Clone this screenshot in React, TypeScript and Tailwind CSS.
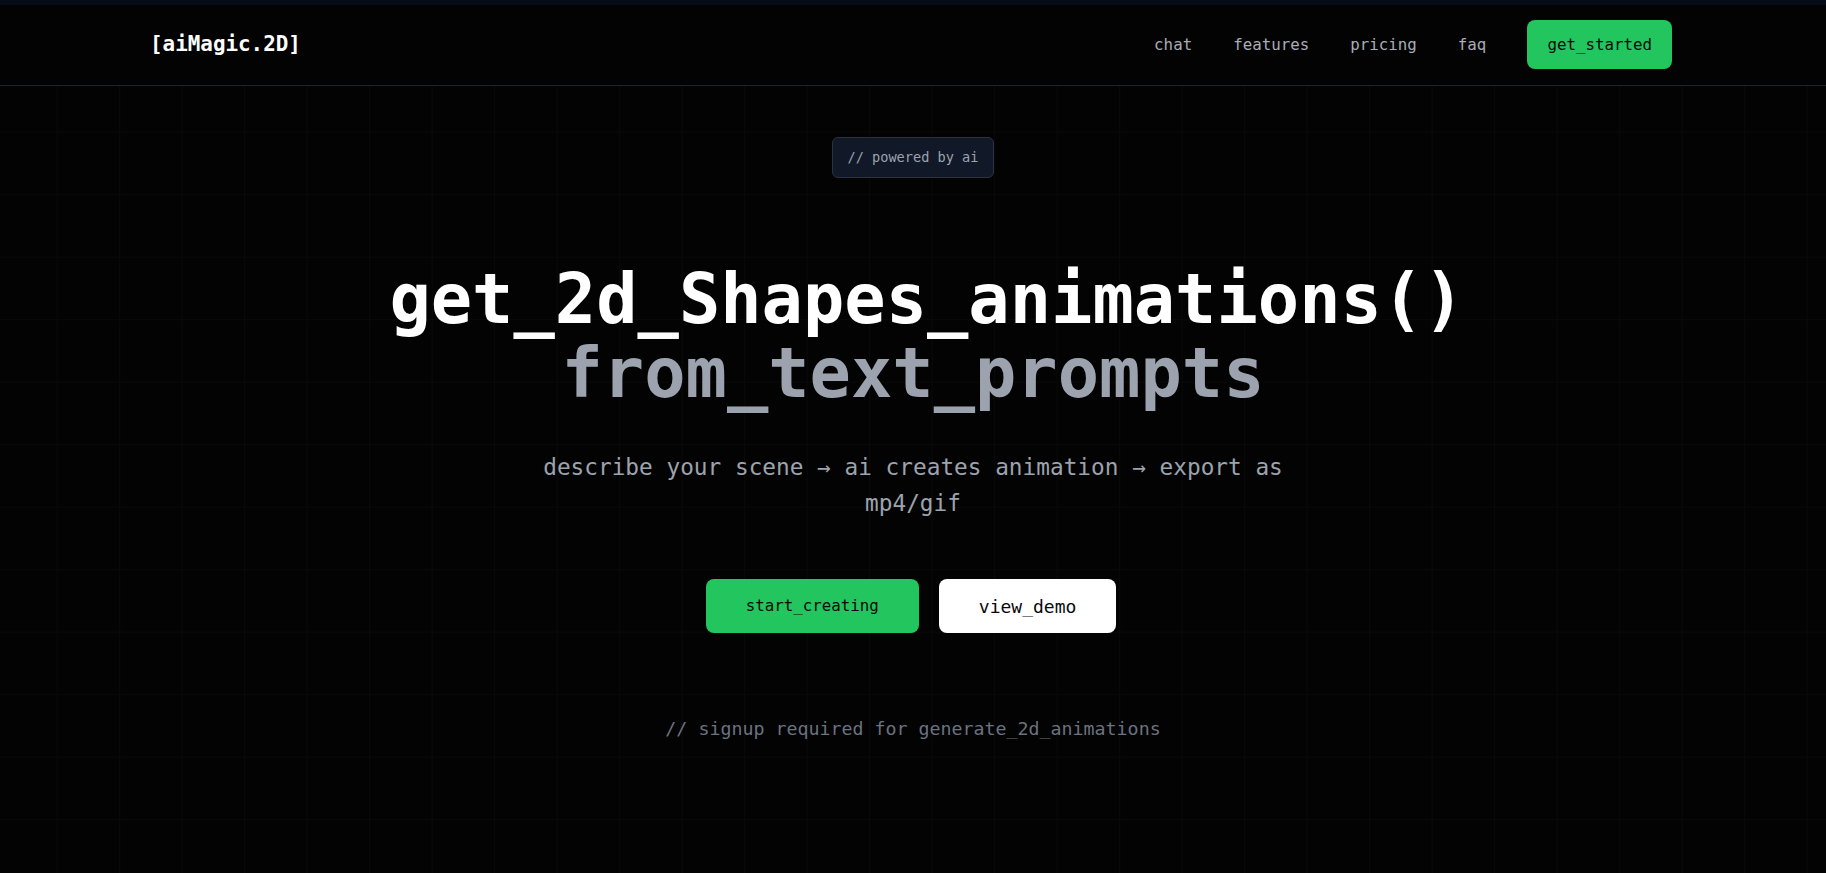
import React from "react";

const mono = { fontFamily: '"DejaVu Sans Mono", "Liberation Mono", monospace' };

export default function App() {
  return (
    <div
      className="min-h-screen w-full bg-[#030303] text-white flex flex-col"
      style={mono}
    >
      <div className="h-[5px] w-full bg-[#060b1a]" />
      <header className="h-[81px] w-full border-b border-[#1f242d] bg-[#030303]">
        <div className="mx-auto flex h-full max-w-[1526px] items-center justify-between pb-[1px] pr-[4px]">
          <div className="text-[20.9px] font-bold tracking-normal text-white">[aiMagic.2D]</div>
          <nav className="flex items-center gap-[41px] text-[15.8px] text-[#a7adb6]">
            <a className="cursor-pointer">chat</a>
            <a className="cursor-pointer">features</a>
            <a className="cursor-pointer">pricing</a>
            <a className="cursor-pointer">faq</a>
            <button className="h-[49px] rounded-lg bg-[#22c55e] px-5 text-[15.8px] text-[#0a0a0a]">
              get_started
            </button>
          </nav>
        </div>
      </header>
      <main className="flex flex-1 flex-col items-center bg-[#030303] bg-[linear-gradient(to_right,#09090a_1px,transparent_1px),linear-gradient(to_bottom,#09090a_1px,transparent_1px)] bg-[size:62.5px_62.5px] bg-[position:56.7px_45.7px] pt-[51px]">
        <div className="flex h-[41px] items-center rounded-md border border-[#2b3240] bg-[#111827] px-[15px] text-[13.6px] text-[#9ca3af]">
          // powered by ai
        </div>
        <h1 className="mt-[84px] text-center text-[68.7px] font-bold leading-[74px]">
          <span className="block pl-[28px] text-white">get_2d_Shapes_animations()</span>
          <span className="block text-[#9ca3af]">from_text_prompts</span>
        </h1>
        <p className="mt-[39px] max-w-[770px] text-center text-[22.75px] leading-[36px] text-[#9ca3af]">
          describe your scene → ai creates animation → export as mp4/gif
        </p>
        <div className="mt-[58px] mr-[4px] flex items-center gap-5">
          <button className="flex h-[54px] items-center rounded-lg bg-[#22c55e] px-10 text-[15.8px] text-[#0a0a0a]">
            start_creating
          </button>
          <button className="flex h-[54px] items-center rounded-lg bg-white px-10 text-[18px] text-[#0a0a0a]">
            view_demo
          </button>
        </div>
        <p className="mt-[82px] text-[18.3px] leading-[28px] text-[#6b7280]">
          // signup required for generate_2d_animations
        </p>
      </main>
    </div>
  );
}
